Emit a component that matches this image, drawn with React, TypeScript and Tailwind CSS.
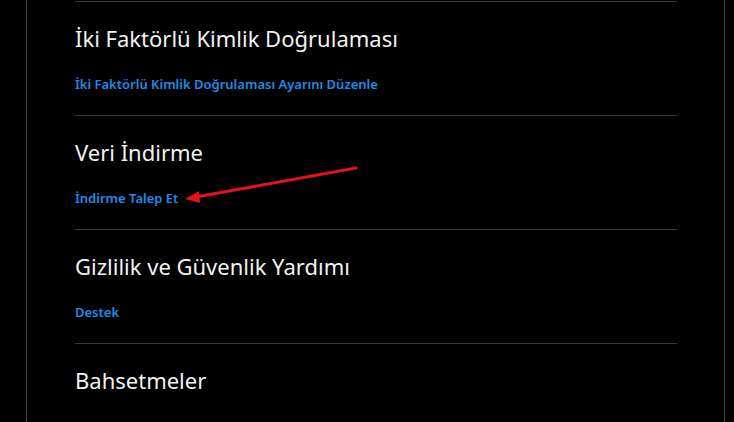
import React from 'react'

const SECTIONS = [
  { title: 'İki Faktörlü Kimlik Doğrulaması', link: 'İki Faktörlü Kimlik Doğrulaması Ayarını Düzenle' },
  { title: 'Veri İndirme', link: 'İndirme Talep Et' },
  { title: 'Gizlilik ve Güvenlik Yardımı', link: 'Destek' },
  { title: 'Bahsetmeler', link: null },
]

export default function App() {
  return (
    <div className="relative h-[422px] w-[734px] overflow-hidden bg-black" style={{ fontFamily: '"Noto Sans", "Open Sans", sans-serif' }}>
      <div className="ml-[26px] h-full w-[699px] border-x border-[#3f3f3f]">
        <div className="ml-[48px] w-[602px] pt-px">
          {SECTIONS.map((s) => (
            <section key={s.title} className="h-[114px] border-t border-[#3a3a3a]">
              <h2 className="pt-[21px] text-[22px] leading-[30px] text-[#f2f2f2]">{s.title}</h2>
              {s.link && (
                <a className="mt-[23px] block text-[13px] font-semibold leading-[16px] text-[#1f8ceb]">{s.link}</a>
              )}
            </section>
          ))}
        </div>
      </div>

      {/* annotation arrow */}
      <svg className="absolute left-0 top-0" width="734" height="422">
        <line x1="356" y1="168" x2="196" y2="197" stroke="#e3121b" strokeWidth="3" strokeLinecap="round" />
        <polygon points="185,199 199,191 200,203" fill="#e3121b" />
      </svg>
    </div>
  )
}
